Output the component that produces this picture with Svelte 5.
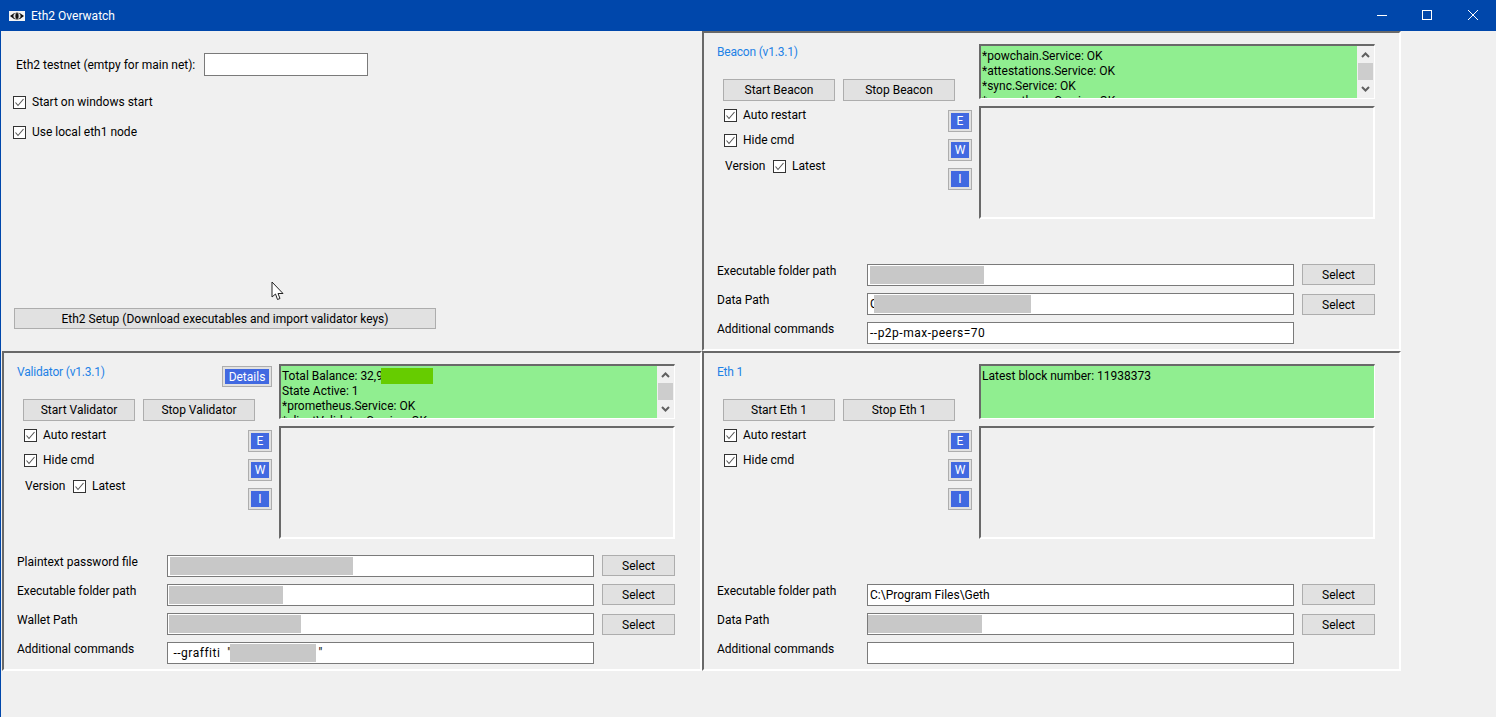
<script>
  const servicePanels = [
    {
      title: "Beacon (v1.3.1)",
      name: "Beacon",
      version: true,
      status: ["*powchain.Service: OK", "*attestations.Service: OK", "*sync.Service: OK", "*prometheus.Service: OK"],
      scroll: true,
      fields: [
        { label: "Executable folder path", select: true, mask: 114, maskLeft: 0 },
        { label: "Data Path", select: true, low: true, text: "C", mask: 157, maskLeft: -4 },
        { label: "Additional commands", text: "--p2p-max-peers=70", spaced: true }
      ]
    },
    {
      title: "Validator (v1.3.1)",
      name: "Validator",
      version: true,
      details: true,
      balance: true,
      status: ["State Active: 1", "*prometheus.Service: OK", "*clientValidator.Service: OK"],
      scroll: true,
      fields: [
        { label: "Plaintext password file", select: true, mask: 183, maskLeft: 0 },
        { label: "Executable folder path", select: true, mask: 114, maskLeft: -1 },
        { label: "Wallet Path", select: true, low: true, mask: 132, maskLeft: -1 },
        { label: "Additional commands", text: " --graffiti  \"", spaced: true, mask: 86, maskLeft: -2, after: " \"" }
      ]
    },
    {
      title: "Eth 1",
      name: "Eth 1",
      status: ["Latest block number: 11938373"],
      fields: [
        { label: "Executable folder path", select: true, text: "C:\\Program Files\\Geth" },
        { label: "Data Path", select: true, low: true, mask: 114, maskLeft: -2 },
        { label: "Additional commands" }
      ]
    }
  ];
  const [beacon, validator, eth1] = servicePanels;
</script>

{#snippet check(label)}
  <div class="check">
    <svg class="box" viewBox="0 0 13 13" width="13" height="13">
      <rect x="0.5" y="0.5" width="12" height="12" fill="#fff" stroke="#333" />
      <path d="M2.5 6.5 L5 9.5 L10.5 3" fill="none" stroke="#555" stroke-width="1.1" />
    </svg>
    <span>{label}</span>
  </div>
{/snippet}

{#snippet panel(p, cls)}
  <section class="panel {cls}">
    <div class="top">
      <div class="controls">
        <div class="title-row">
          <span class="title">{p.title}</span>
          {#if p.details}
            <button class="blue-wrap details"><span>Details</span></button>
          {/if}
        </div>
        <div class="actions">
          <button class="btn">Start {p.name}</button>
          <button class="btn">Stop {p.name}</button>
        </div>
        <div class="options">
          <div class="checks">
            {@render check("Auto restart")}
            {@render check("Hide cmd")}
            {#if p.version}
              <div class="version">
                <span class="version-label">Version</span>
                {@render check("Latest")}
              </div>
            {/if}
          </div>
          <div class="levels">
            {#each ["E", "W", "I"] as level}
              <button class="blue-wrap level"><span>{level}</span></button>
            {/each}
          </div>
        </div>
      </div>
      <div class="logs">
        <div class="status">
          <div class="status-lines">
            {#if p.balance}
              <div class="balance">Total Balance: 32,93<span class="balance-mask"></span></div>
            {/if}
            {#each p.status as line}
              <div>{line}</div>
            {/each}
          </div>
          {#if p.scroll}
            <div class="scrollbar">
              <svg viewBox="0 0 15 8" width="15" height="8"><path d="M4 6 L7.5 2.5 L11 6" fill="none" stroke="#606060" stroke-width="2" /></svg>
              <div class="thumb"></div>
              <svg viewBox="0 0 15 8" width="15" height="8"><path d="M4 2 L7.5 5.5 L11 2" fill="none" stroke="#606060" stroke-width="2" /></svg>
            </div>
          {/if}
        </div>
        <div class="log"></div>
      </div>
    </div>
    <div class="fields">
      {#each p.fields as f}
        <div class="field">
          <label for="">{f.label}</label>
          <div class="input">
            {#if f.text}<span class:spaced={f.spaced}>{f.text}</span>{/if}
            {#if f.mask}<span class="mask" style="width: {f.mask}px; margin-left: {f.maskLeft}px"></span>{/if}
            {#if f.after}<span>{f.after}</span>{/if}
          </div>
          {#if f.select}<button class="btn select" class:low={f.low}>Select</button>{/if}
        </div>
      {/each}
    </div>
  </section>
{/snippet}

<div class="window">
  <header class="titlebar">
    <div class="app-name">
      <svg viewBox="0 0 16 10" width="16" height="10">
        <rect width="16" height="10" fill="#f4f4f4" />
        <path d="M1 5 Q8 -2 15 5 Q8 12 1 5 Z" fill="#111" />
        <ellipse cx="8" cy="5" rx="3.6" ry="3" fill="#ddd" />
        <ellipse cx="8" cy="5" rx="1.6" ry="3" fill="#111" />
      </svg>
      <span>Eth2 Overwatch</span>
    </div>
    <div class="window-buttons">
      <svg viewBox="0 0 46 30" width="46" height="30"><path d="M19 15.5 H29" stroke="#fff" /></svg>
      <svg viewBox="0 0 46 30" width="46" height="30"><rect x="18.5" y="10.5" width="9" height="9" fill="none" stroke="#fff" /></svg>
      <svg viewBox="0 0 46 30" width="46" height="30"><path d="M18 10 L28 20 M28 10 L18 20" stroke="#fff" /></svg>
    </div>
  </header>

  <main class="grid">
    <section class="settings">
      <div class="testnet">
        <span>Eth2 testnet (emtpy for main net):</span>
        <div class="input testnet-input"></div>
      </div>
      <div class="settings-checks">
        {@render check("Start on windows start")}
        {@render check("Use local eth1 node")}
      </div>
      <button class="btn setup">Eth2 Setup (Download executables and import validator keys)</button>
      <svg class="cursor" viewBox="0 0 14 20" width="14" height="20">
        <path d="M1 1 V16 L4.5 13 L6.5 18.5 L9 17.5 L7 12.5 H12 Z" fill="#fff" stroke="#222" />
      </svg>
    </section>
    {@render panel(beacon, "beacon")}
    {@render panel(validator, "validator")}
    {@render panel(eth1, "eth1")}
  </main>
</div>

<style>
  :global(body) {
    margin: 0;
    background: #f0f0f0;
  }

  .window {
    width: 1496px;
    height: 717px;
    box-sizing: border-box;
    border-left: 1px solid #0047ab;
    background: #f0f0f0;
    color: #000;
    font-family: Roboto, sans-serif;
    font-size: 12px;
    overflow: hidden;
  }

  .titlebar {
    height: 31px;
    margin-left: -1px;
    background: #0047ab;
    color: #fff;
    display: flex;
    justify-content: space-between;
    align-items: center;
  }

  .app-name {
    display: flex;
    align-items: center;
    gap: 6px;
    padding-left: 9px;
  }

  .window-buttons {
    display: flex;
    height: 30px;
    align-self: flex-start;
  }

  .grid {
    display: grid;
    grid-template-columns: 701px 699px;
    grid-template-rows: 320px 320px;
    width: 1400px;
  }

  .settings {
    position: relative;
    display: flex;
    flex-direction: column;
    align-items: flex-start;
    padding: 22px 0 0 12px;
    box-sizing: border-box;
  }

  .testnet {
    display: flex;
    align-items: center;
    gap: 9px;
    padding-left: 3px;
  }

  .input.testnet-input {
    width: 164px;
    height: 23px;
  }

  .settings-checks {
    display: flex;
    flex-direction: column;
    gap: 14px;
    margin-top: 18px;
  }

  .btn.setup {
    width: 422px;
    height: 21px;
    margin-top: auto;
    margin-bottom: 22px;
    margin-left: 1px;
  }

  .cursor {
    position: absolute;
    left: 270px;
    top: 250px;
  }

  .panel {
    display: flex;
    flex-direction: column;
    box-sizing: border-box;
    padding: 11px 24px 5px 13px;
    border-top: 2px solid #696969;
    border-left: 2px solid #696969;
    border-right: 2px solid #fff;
    border-bottom: 2px solid #fff;
  }

  .validator {
    margin-left: 1px;
  }

  .top {
    display: flex;
  }

  .controls {
    width: 262px;
    flex: none;
  }

  .title-row {
    height: 35px;
    display: flex;
    justify-content: space-between;
    align-items: flex-start;
    padding-right: 7px;
  }

  .title {
    color: #1e82e6;
    line-height: 16px;
    letter-spacing: -0.2px;
  }

  .actions {
    display: flex;
    gap: 8px;
    padding-left: 6px;
  }

  .btn {
    height: 22px;
    width: 112px;
    box-sizing: border-box;
    padding: 0;
    background: #e1e1e1;
    border: 1px solid #adadad;
    font: inherit;
    color: #000;
  }

  .options {
    display: flex;
    justify-content: space-between;
    padding: 0 7px 0 7px;
  }

  .checks {
    display: flex;
    flex-direction: column;
    gap: 9px;
    padding-top: 6px;
  }

  .check {
    display: flex;
    align-items: center;
    gap: 6px;
    height: 16px;
  }

  .box {
    flex: none;
  }

  .version {
    display: flex;
    align-items: center;
    padding-left: 1px;
  }

  .version .check {
    margin-top: 1px;
  }

  .version-label {
    width: 48px;
  }

  .levels {
    display: flex;
    flex-direction: column;
    gap: 7px;
    padding-top: 9px;
  }

  .blue-wrap {
    box-sizing: border-box;
    padding: 2px;
    background: #e1e1e1;
    border: 1px solid #adadad;
    font: inherit;
    display: flex;
  }

  .blue-wrap span {
    flex: 1;
    background: #4169e1;
    color: #fff;
    display: flex;
    align-items: center;
    justify-content: center;
  }

  .level {
    width: 24px;
    height: 22px;
  }

  .details {
    width: 50px;
    height: 21px;
    margin-top: 2px;
  }

  .logs {
    width: 396px;
    flex: none;
    display: flex;
    flex-direction: column;
    gap: 7px;
  }

  .status {
    height: 55px;
    box-sizing: border-box;
    display: flex;
    background: #90ee90;
    border-top: 2px solid #696969;
    border-left: 2px solid #696969;
    border-right: 1px solid #fff;
    border-bottom: 1px solid #fff;
    overflow: hidden;
  }

  .status-lines {
    flex: 1;
    padding: 3px 1px 0;
    line-height: 15px;
    white-space: nowrap;
    overflow: hidden;
  }

  .balance {
    display: flex;
    white-space: pre;
  }

  .balance-mask {
    width: 52px;
    height: 16px;
    flex: none;
    background: #66cc00;
    margin-left: -9px;
    margin-top: -1px;
    margin-bottom: -1px;
  }

  .scrollbar {
    width: 17px;
    flex: none;
    background: #f0f0f0;
    display: flex;
    flex-direction: column;
    align-items: center;
    justify-content: space-between;
    padding: 5px 0;
    box-sizing: border-box;
  }

  .thumb {
    width: 15px;
    height: 17px;
    background: #cdcdcd;
    margin-bottom: 1px;
  }

  .log {
    height: 113px;
    box-sizing: border-box;
    border-top: 2px solid #696969;
    border-left: 2px solid #696969;
    border-right: 2px solid #fff;
    border-bottom: 2px solid #fff;
  }

  .fields {
    margin-top: auto;
    display: flex;
    flex-direction: column;
    gap: 7px;
  }

  .field {
    display: flex;
    align-items: flex-start;
    height: 22px;
  }

  .field label {
    width: 150px;
    flex: none;
    line-height: 16px;
    margin-top: -1px;
  }

  .input {
    height: 22px;
    width: 427px;
    box-sizing: border-box;
    flex: none;
    background: #fff;
    border: 1px solid #7a7a7a;
    padding-left: 2px;
    display: flex;
    align-items: center;
    white-space: pre;
  }

  .spaced {
    letter-spacing: 0.5px;
  }

  .mask {
    height: 18px;
    flex: none;
    background: #c8c8c8;
  }

  .btn.select {
    width: 73px;
    height: 21px;
    margin-left: 8px;
  }

  .btn.select.low {
    margin-top: 1px;
  }
</style>
